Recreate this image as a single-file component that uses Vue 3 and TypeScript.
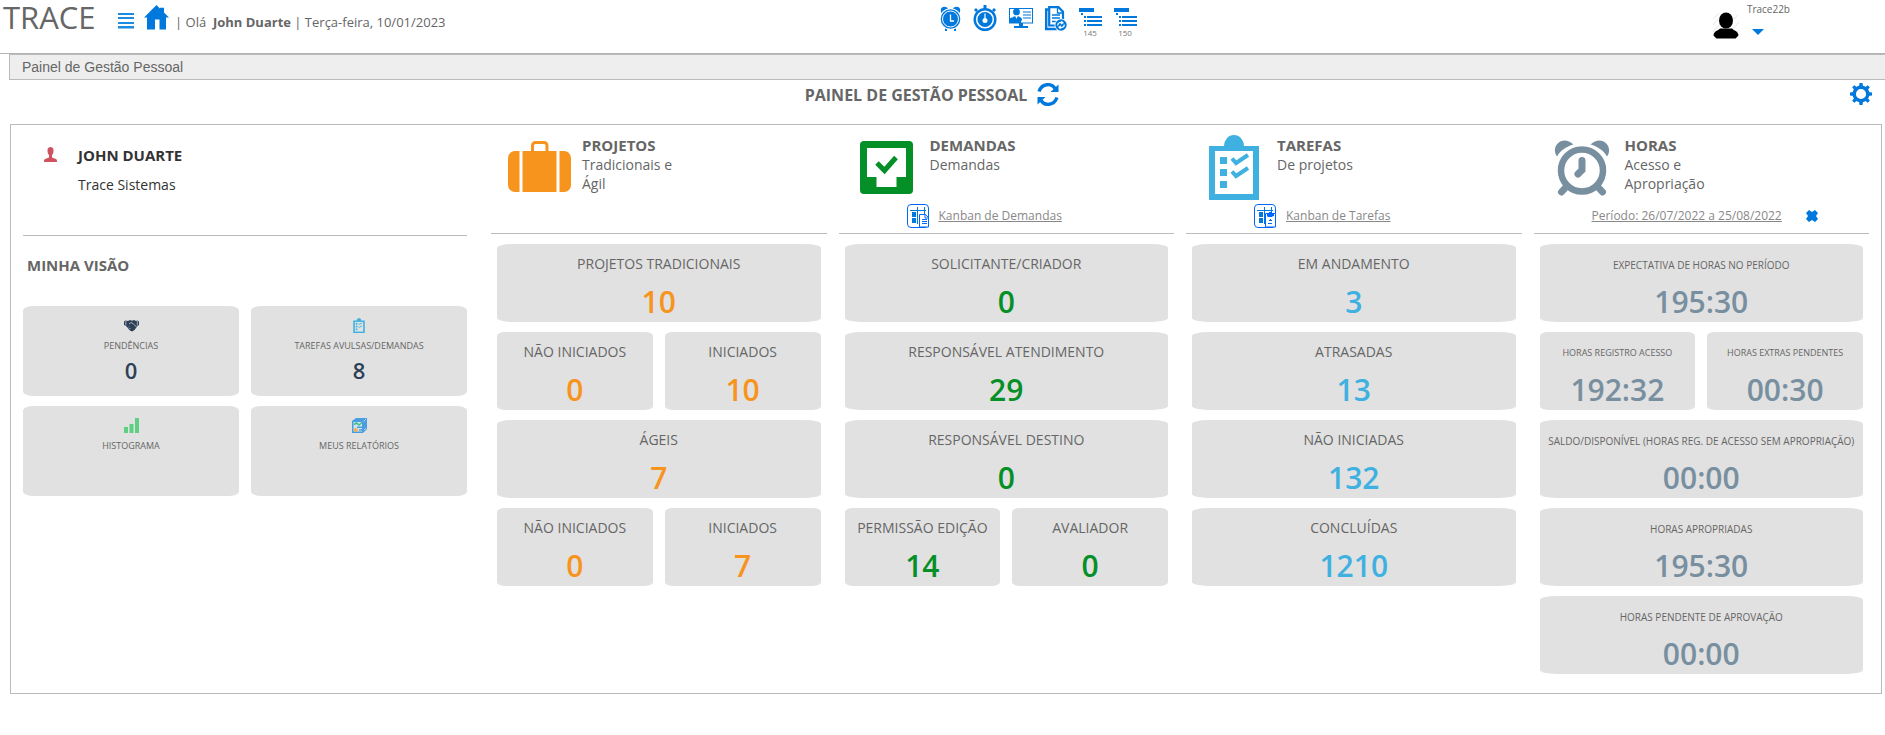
<script setup lang="ts">
interface Tile {
  label: string
  value: string
}

interface Section {
  id: string
  title: string
  lines: string[]
  link?: string
  rows: Tile[][]
}

const sections: Section[] = [
  {
    id: 'projetos',
    title: 'PROJETOS',
    lines: ['Tradicionais e', 'Ágil'],
    rows: [
      [{ label: 'PROJETOS TRADICIONAIS', value: '10' }],
      [{ label: 'NÃO INICIADOS', value: '0' }, { label: 'INICIADOS', value: '10' }],
      [{ label: 'ÁGEIS', value: '7' }],
      [{ label: 'NÃO INICIADOS', value: '0' }, { label: 'INICIADOS', value: '7' }],
    ],
  },
  {
    id: 'demandas',
    title: 'DEMANDAS',
    lines: ['Demandas'],
    link: 'Kanban de Demandas',
    rows: [
      [{ label: 'SOLICITANTE/CRIADOR', value: '0' }],
      [{ label: 'RESPONSÁVEL ATENDIMENTO', value: '29' }],
      [{ label: 'RESPONSÁVEL DESTINO', value: '0' }],
      [{ label: 'PERMISSÃO EDIÇÃO', value: '14' }, { label: 'AVALIADOR', value: '0' }],
    ],
  },
  {
    id: 'tarefas',
    title: 'TAREFAS',
    lines: ['De projetos'],
    link: 'Kanban de Tarefas',
    rows: [
      [{ label: 'EM ANDAMENTO', value: '3' }],
      [{ label: 'ATRASADAS', value: '13' }],
      [{ label: 'NÃO INICIADAS', value: '132' }],
      [{ label: 'CONCLUÍDAS', value: '1210' }],
    ],
  },
  {
    id: 'horas',
    title: 'HORAS',
    lines: ['Acesso e', 'Apropriação'],
    link: 'Período: 26/07/2022 a 25/08/2022',
    rows: [
      [{ label: 'EXPECTATIVA DE HORAS NO PERÍODO', value: '195:30' }],
      [{ label: 'HORAS REGISTRO ACESSO', value: '192:32' }, { label: 'HORAS EXTRAS PENDENTES', value: '00:30' }],
      [{ label: 'SALDO/DISPONÍVEL (HORAS REG. DE ACESSO SEM APROPRIAÇÃO)', value: '00:00' }],
      [{ label: 'HORAS APROPRIADAS', value: '195:30' }],
      [{ label: 'HORAS PENDENTE DE APROVAÇÃO', value: '00:00' }],
    ],
  },
]

const views = [
  { id: 'pendencias', label: 'PENDÊNCIAS', value: '0' },
  { id: 'avulsas', label: 'TAREFAS AVULSAS/DEMANDAS', value: '8' },
  { id: 'histograma', label: 'HISTOGRAMA', value: '' },
  { id: 'relatorios', label: 'MEUS RELATÓRIOS', value: '' },
]
</script>

<template>
  <div class="page">
    <header class="topbar">
      <div class="top-left">
        <span class="logo">TRACE</span>
        <button class="icon-btn menu" aria-label="Menu">
          <svg width="16" height="17" viewBox="0 0 16 17" fill="#1c8be0">
            <path d="M0 1h16v2H0zM0 5h16v2H0zM0 10h16v2H0zM0 14h16v2.500H0z" />
          </svg>
        </button>
        <a href="#" class="home" aria-label="Início">
          <svg width="25" height="25" viewBox="0 0 25 25" fill="#0078dc">
            <path d="M12.500 0 16 3.400V2.800h4V7.400L25 12.500H22V24.500H15.500V14.500H11V24.500H3V12.500H0z" />
          </svg>
        </a>
        <span class="greeting">| Olá &nbsp;<strong>John Duarte</strong> | Terça-feira, 10/01/2023</span>
      </div>

      <nav class="top-icons">
        <button class="icon-btn" aria-label="Despertador">
          <svg width="21" height="26" viewBox="0 0 21 26" fill="#0078dc">
            <circle cx="4.500" cy="5.500" r="3.700" /><circle cx="16.500" cy="5.500" r="3.700" />
            <path d="M5 21h2v5H5zM14 21h2v5h-2z" />
            <circle cx="10.500" cy="14" r="10.800" fill="#fff" /><circle cx="10.500" cy="14" r="9.800" />
            <circle cx="10.500" cy="14" r="8" fill="none" stroke="#fff" stroke-width="1" />
            <path d="M10.500 9.500V16H14" fill="none" stroke="#fff" stroke-width="1.300" />
          </svg>
        </button>
        <button class="icon-btn" aria-label="Cronômetro">
          <svg width="24" height="26" viewBox="0 0 24 26" fill="#0078dc">
            <path d="M10.500 0h3v4h-3zM19 5l2-2 2 2-2 2zM1 5l2-2 2 2-2 2z" />
            <circle cx="12" cy="14.500" r="11.500" />
            <circle cx="12" cy="14.500" r="8.300" fill="none" stroke="#fff" stroke-width="1.500" />
            <circle cx="12" cy="15.500" r="2.500" fill="#fff" /><path d="M11.400 8.500h1.200v7h-1.200z" fill="#fff" />
          </svg>
        </button>
        <button class="icon-btn" aria-label="Atendimento">
          <svg width="24" height="26" viewBox="0 0 24 26" fill="#0078dc">
            <path d="M0 3h24v15.500H0z" /><path d="M1 4h22v13.500H1z" fill="#fff" />
            <circle cx="7.500" cy="7" r="3.400" /><circle cx="2.800" cy="14.500" r="2" /><circle cx="11" cy="14.500" r="2" />
            <path d="M3 14c0-4 9-4 9 0v4H0v-2zM14 6.500h8v1h-8zM14 9.500h8v1h-8zM14 12.500h8v1h-8zM10 18h4v3h5v2H5v-2h5z" />
            <path d="m6 10.500 1.500 3.500L9 10.500z" fill="#fff" />
          </svg>
        </button>
        <button class="icon-btn" aria-label="Documentos">
          <svg width="22" height="26" viewBox="0 0 22 26">
            <path d="M3.500 4.500H1.200V24H12" fill="none" stroke="#0078dc" stroke-width="2.400" />
            <path d="M4.200 2.200h9.300l4.500 4.500V20.500H4.200z" fill="#fff" stroke="#0078dc" stroke-width="2.200" />
            <path d="M12.500 2v6h6M7 10h8M7 13h8M7 16.500h6" fill="none" stroke="#0078dc" stroke-width="1.300" />
            <circle cx="16" cy="20" r="6.500" fill="#fff" /><circle cx="16" cy="20" r="5.700" fill="#0078dc" />
            <path d="M12.700 20.500c0-3 3-3.500 4.500-2.500M19.300 19.500c0 3-3 3.500-4.500 2.500" fill="none" stroke="#fff" stroke-width="1.300" />
            <path d="m16.500 15.500 2.500 2.500-3 1.500zM15.500 24.500l-2.500-2.500 3-1.500z" fill="#fff" />
          </svg>
        </button>
        <button v-for="count in ['145', '150']" :key="count" class="icon-btn counted">
          <svg width="23" height="18" viewBox="0 0 23 18" fill="#0078dc">
            <path d="M0 0h15v4H0zM2 5h2v2H2zM5 8h2v2H5zM8 8h15v2H8zM5 12h2v2H5zM8 12h15v2H8zM5 16h2v2H5zM8 16h15v2H8z" />
          </svg>
          <span>{{ count }}</span>
        </button>
      </nav>

      <div class="account">
        <svg width="28" height="28" viewBox="0 0 28 28">
          <path d="m1 7 6-6M1 13 11 2M1 20 9 11M2 25 26 3M20 26l7-8M20 18l7-8" stroke="#e4e4e4" stroke-width="1" />
          <ellipse cx="14" cy="8.500" rx="7" ry="8" />
          <path d="M8 16.500h12c2 2.500 6 2 6.500 7L23.500 26.500H4.500L1.500 23.500C2 18.500 6 19 8 16.500z" />
        </svg>
        <div class="account-text">
          <span>Trace22b</span>
          <button class="icon-btn caret" aria-label="Abrir menu da conta">
            <svg width="12" height="6" viewBox="0 0 12 6" fill="#0078dc"><path d="M0 0h12L6 6z" /></svg>
          </button>
        </div>
      </div>
    </header>

    <div class="breadcrumb">Painel de Gestão Pessoal</div>

    <div class="title-row">
      <h1>
        PAINEL DE GESTÃO PESSOAL
        <button class="icon-btn" aria-label="Atualizar">
          <svg width="22" height="23" viewBox="0 0 22 23" fill="none" stroke="#0078dc" stroke-width="3.400">
            <path d="M2 8.500C5 0 14.500 0 18 5.500M20 14.500C17 23 7.500 23 4 17.500" />
            <path d="M21.500 1.500V9h-8zM.5 21.500V14h8z" fill="#0078dc" stroke="none" />
          </svg>
        </button>
      </h1>
      <button class="icon-btn gear" aria-label="Configurações">
        <svg width="22" height="22" viewBox="0 0 22 22">
          <g fill="#0078dc">
            <path v-for="a in 8" :key="a" d="M9 4 9.500 0h3L13 4z" :transform="`rotate(${a * 45} 11 11)`" />
          </g>
          <circle cx="11" cy="11" r="6.800" fill="none" stroke="#0078dc" stroke-width="3.400" />
        </svg>
      </button>
    </div>

    <main class="panel">
      <section class="personal">
        <div class="person">
          <svg width="13" height="15" viewBox="0 0 13 15" fill="#cf5260">
            <path d="M3.500 3C3.500-1 9.500-1 9.500 3 9.500 6 9 7 8 8v2.500l4 1.500c1 .5 1 1.500 1 3H0c0-1.500 0-2.500 1-3l4-1.500V8C4 7 3.500 6 3.500 3z" />
          </svg>
          <div>
            <h2>JOHN DUARTE</h2>
            <p>Trace Sistemas</p>
          </div>
        </div>
        <h3>MINHA VISÃO</h3>
        <div class="views">
          <button v-for="view in views" :key="view.id" class="view">
            <svg v-if="view.id === 'pendencias'" width="15" height="15" viewBox="0 0 15 15">
              <path d="M0 3.500 1.500 2.500 4 3l2-1 2 .7L10 2l2 1 1.500-.5L15 3.500V7l-1.500 1L10.500 12 8 13.500 6 12.500 2 8 0 7z" fill="#2b4057" />
              <path d="M1.800 3v4.500M13.300 3v4.500M5 6 7 4.500l2 1L12.500 9M4 9.500l1-1M5.500 11l1-1" stroke="#e1e1e1" stroke-width=".7" fill="none" />
            </svg>
            <svg v-else-if="view.id === 'avulsas'" width="12" height="15" viewBox="0 0 50 65">
              <path d="M15 11a10 11 0 0 1 20 0h15v54H0V11z" fill="#3fb1e0" />
              <path d="M7 17h36v42H7z" fill="#e1e1e1" />
              <path d="M11 22h7v7h-7zM11 34h7v7h-7zM11 46h7v7h-7z" fill="#3fb1e0" />
              <path d="m22 24 4 4 12-7M22 37l4 4 12-7" fill="none" stroke="#3fb1e0" stroke-width="4" />
            </svg>
            <svg v-else-if="view.id === 'histograma'" width="15" height="15" viewBox="0 0 15 15" fill="#5fd081">
              <path d="M0 9h4v6H0zM5.500 6h4v9h-4zM11 0h4v15h-4z" />
            </svg>
            <svg v-else width="15" height="15" viewBox="0 0 15 15">
              <path d="M0 3 4 0h11v11l-4 4H0z" fill="#4a9de0" />
              <path d="M1.500 4H10v9.500H1.500z" fill="#cfe3f2" /><path d="M11.500 3.500 14 1M12 12l2-2" stroke="#a9d2f2" />
              <path d="M2 6.500 4.500 5 7 7l3-2.500" stroke="#40bf7f" stroke-width="1.500" fill="none" />
              <path d="M5 8.500h5v1.500H5z" fill="#4a9de0" /><circle cx="3.800" cy="12" r="2" fill="#f5ae4c" /><path d="M7 11h3v2H7z" fill="#6aaee6" />
            </svg>
            <span class="view-label">{{ view.label }}</span>
            <span class="view-value">{{ view.value }}</span>
          </button>
        </div>
      </section>

      <div class="sections">
        <section v-for="section in sections" :key="section.id" :class="section.id">
          <div class="section-head">
            <div class="intro">
              <div class="section-icon">
                <svg v-if="section.id === 'projetos'" width="63" height="52" viewBox="0 0 63 52" fill="#f7941e">
                  <path d="M14.500 10H48.500V51H14.500zM11.500 10V51H7a7 7 0 0 1-7-7V17a7 7 0 0 1 7-7zM51.500 10V51H56a7 7 0 0 0 7-7V17a7 7 0 0 0-7-7z" />
                  <path d="M24.500 11V4.500a3 3 0 0 1 3-3h8.500a3 3 0 0 1 3 3V11" fill="none" stroke="#f7941e" stroke-width="3" />
                </svg>
                <svg v-else-if="section.id === 'demandas'" width="53" height="53" viewBox="0 0 53 53">
                  <rect width="53" height="53" rx="4" fill="#058f27" />
                  <path d="M7 7h39v29H36.500v10H16.500V36H7z" fill="#fff" />
                  <path d="m17 22 7.500 7.500L36 16.500" fill="none" stroke="#058f27" stroke-width="5" />
                </svg>
                <svg v-else-if="section.id === 'tarefas'" width="50" height="65" viewBox="0 0 50 65">
                  <path d="M15 11a10 11 0 0 1 20 0h15v54H0V11z" fill="#3fb1e0" />
                  <path d="M6 16h38v43H6z" fill="#fff" />
                  <path d="M11 22h7v7h-7zM11 34h7v7h-7zM11 46h7v7h-7z" fill="#3fb1e0" />
                  <path d="m23 23.500 4 4.500 12-8M23 36.500l4 4.500 12-8" fill="none" stroke="#3fb1e0" stroke-width="4" />
                </svg>
                <svg v-else width="56" height="57" viewBox="0 0 56 57" fill="none" stroke="#788fa0" stroke-linecap="round">
                  <path d="M3 17.500C-4 8 8-5 19.500 5.500 12 7.500 6 12 3 17.500zM53 17.500C60 8 48-5 36.500 5.500 44 7.500 50 12 53 17.500z" fill="#788fa0" stroke="none" />
                  <circle cx="28" cy="31.500" r="21" stroke-width="6.500" />
                  <path d="m13 47-5.500 6M43 47l5.500 6" stroke-width="7" />
                  <path d="M28 21.500V31l-4 4" stroke-width="7" />
                </svg>
              </div>
              <div class="section-text">
                <h2>{{ section.title }}</h2>
                <p v-for="line in section.lines" :key="line">{{ line }}</p>
              </div>
            </div>
            <div v-if="section.link" class="section-link">
              <svg v-if="section.id === 'demandas' || section.id === 'tarefas'" width="22" height="24" viewBox="0 0 22 24">
                <rect x=".5" y=".5" width="21" height="23" rx="3.500" fill="#fff" stroke="#06f" />
                <path d="M3 6.500h16M10.500 3v17M17.500 3v7" stroke="#0078dc" fill="none" />
                <path d="M5 8h4v5H5zM5 14h4v5H5z" fill="#0078dc" />
                <template v-if="section.id === 'demandas'">
                  <path d="M12.500 10.500h6l3 3v9.500h-9z" fill="#fff" stroke="#06f" />
                  <path d="M18 10.500V14h3.500M15 15.500h5M15 17.500h5M15 19.500h5" stroke="#06f" fill="none" />
                </template>
                <template v-else>
                  <path d="M11.500 9.500h10v13.500h-10z" fill="#fff" stroke="#06f" />
                  <path d="M15 8h3v2h2v2h-2l1 1h-6l1-1h-1v-2h2zM16 15h1v1h1v1h-3v-1h1zM14 19h4v1h-4z" fill="#06f" />
                </template>
              </svg>
              <a href="#">{{ section.link }}</a>
              <button v-if="section.id === 'horas'" class="icon-btn" aria-label="Limpar período">
                <svg width="12" height="12" viewBox="0 0 12 12" fill="#0078dc">
                  <path d="M3 0 6 2 9 0l3 3-2 3 2 3-3 3-3-2-3 2-3-3 2-3-2-3z" />
                </svg>
              </button>
            </div>
          </div>
          <div class="rows">
            <div v-for="(row, r) in section.rows" :key="r" class="row" :class="{ split: row.length > 1 }">
              <button v-for="tile in row" :key="tile.label" class="tile">
                <span class="tile-label">{{ tile.label }}</span>
                <span class="tile-value">{{ tile.value }}</span>
              </button>
            </div>
          </div>
        </section>
      </div>
    </main>
  </div>
</template>

<style>
body {
  margin: 0;
  background: #fff;
}
</style>

<style scoped>
* {
  box-sizing: border-box;
}
.page {
  font-family: "Open Sans", "Noto Sans", sans-serif;
  color: #666;
}
h1,
h2,
h3,
p {
  margin: 0;
}
button {
  font-family: inherit;
  color: inherit;
  border: 0;
  padding: 0;
  cursor: pointer;
}
svg {
  display: block;
}
.icon-btn {
  background: none;
}
.topbar {
  display: grid;
  grid-template-columns: 939fr auto 748fr;
  align-items: start;
  height: 54px;
  border-bottom: 1px solid #b4b4b4;
}
.top-left {
  display: flex;
  padding-left: 3px;
}
.logo {
  width: 115px;
  font-size: 31px;
  line-height: 34px;
}
.menu {
  margin-top: 12px;
  align-self: flex-start;
}
.home {
  margin: 5px 6px 0 10px;
}
.greeting {
  font-size: 13px;
  line-height: 18px;
  margin-top: 13px;
  white-space: nowrap;
}
.top-icons {
  display: flex;
  align-items: flex-start;
  gap: 12px;
  padding-top: 5px;
}
.counted {
  padding-top: 3px;
}
.counted span {
  display: block;
  font-size: 8px;
  line-height: 14px;
  color: #777;
}
.account {
  display: flex;
  justify-content: flex-end;
  gap: 7px;
  padding-right: 95px;
}
.account > svg {
  margin-top: 12px;
}
.account-text {
  font-size: 10px;
  line-height: 18px;
}
.account-text span {
  display: block;
}
.caret {
  display: block;
  margin: 11px 0 0 5px;
}
.breadcrumb {
  margin-left: 9px;
  height: 26px;
  padding-left: 12px;
  border: 1px solid #bbb;
  border-right: 0;
  background: #eee;
  font-family: "Liberation Sans", Arial, sans-serif;
  font-size: 14px;
  line-height: 24px;
}
.title-row {
  display: grid;
  grid-template-columns: 806fr auto 814fr;
  height: 44px;
  padding: 3px 13px 0 0;
}
.title-row h1 {
  grid-column: 2;
  display: flex;
  gap: 10px;
  align-items: flex-start;
  font-size: 16px;
  line-height: 24px;
  font-weight: 700;
}
.gear {
  justify-self: end;
  align-self: start;
}
.panel {
  display: flex;
  gap: 24px;
  margin: 0 3px 0 10px;
  padding: 0 12px 19px;
  border: 1px solid #bbb;
}
.personal {
  flex: 444 1 0;
  min-width: 0;
}
.person {
  display: flex;
  gap: 21px;
  height: 111px;
  padding: 20px 0 0 21px;
  border-bottom: 1px solid #bbb;
  color: #333;
}
.person svg {
  margin-top: 2px;
}
.person h2,
h3 {
  font-size: 15px;
  line-height: 20px;
}
.person p {
  font-size: 14px;
  line-height: 20px;
  margin-top: 10px;
}
h3 {
  margin: 19px 4px 31px;
}
.views {
  display: grid;
  grid-template-columns: 1fr 1fr;
  gap: 10px 12px;
}
.view {
  display: flex;
  flex-direction: column;
  align-items: center;
  height: 90px;
  padding-top: 12px;
  border-radius: 5%;
  background: #e1e1e1;
}
.view-label {
  font-size: 9px;
  line-height: 14px;
  margin-top: 6px;
}
.view-value {
  font-size: 22px;
  line-height: 30px;
  margin-top: 2px;
  color: #2b4057;
  font-weight: 600;
}
.sections {
  flex: 1378 1 0;
  min-width: 0;
  display: grid;
  grid-template-columns: repeat(4, minmax(0, 1fr));
  gap: 12px;
}
.section-head {
  height: 109px;
  border-bottom: 1px solid #bbb;
}
.intro {
  display: flex;
  height: 79px;
}
.section-icon {
  width: 84px;
  margin: 0 1px 0 6px;
  padding-top: 5px;
  display: flex;
  align-items: center;
  justify-content: center;
}
.section-text {
  padding-top: 11px;
  font-size: 14px;
  line-height: 19px;
}
.section-text h2 {
  font-size: 15px;
  line-height: 19px;
}
.section-link {
  display: flex;
  align-items: center;
  gap: 10px;
  height: 24px;
  padding-left: 68px;
}
.section-link a {
  color: #888;
  font-size: 12px;
  line-height: 16px;
}
.horas .section-link {
  padding-left: 58px;
  gap: 24px;
}
.rows {
  display: grid;
  gap: 10px;
  padding: 10px 6px 0;
}
.row {
  display: flex;
  gap: 12px;
}
.tile {
  display: flex;
  flex-direction: column;
  align-items: center;
  flex: 1 1 0;
  min-width: 0;
  height: 78px;
  padding-top: 10px;
  border-radius: 5%;
  background: #e1e1e1;
  white-space: nowrap;
}
.tile-label {
  font-size: 14px;
  line-height: 20px;
}
.tile-value {
  font-size: 30px;
  line-height: 38px;
  margin-top: 9px;
  font-weight: 600;
}
.horas .tile-label {
  font-size: 10px;
  line-height: 22px;
}
.horas .split .tile-label {
  font-size: 9px;
}
.horas .tile-value {
  margin-top: 7px;
  color: #788fa0;
}
.projetos .tile-value {
  color: #f7941e;
}
.demandas .tile-value {
  color: #058f27;
}
.tarefas .tile-value {
  color: #3fb1e0;
}
</style>
